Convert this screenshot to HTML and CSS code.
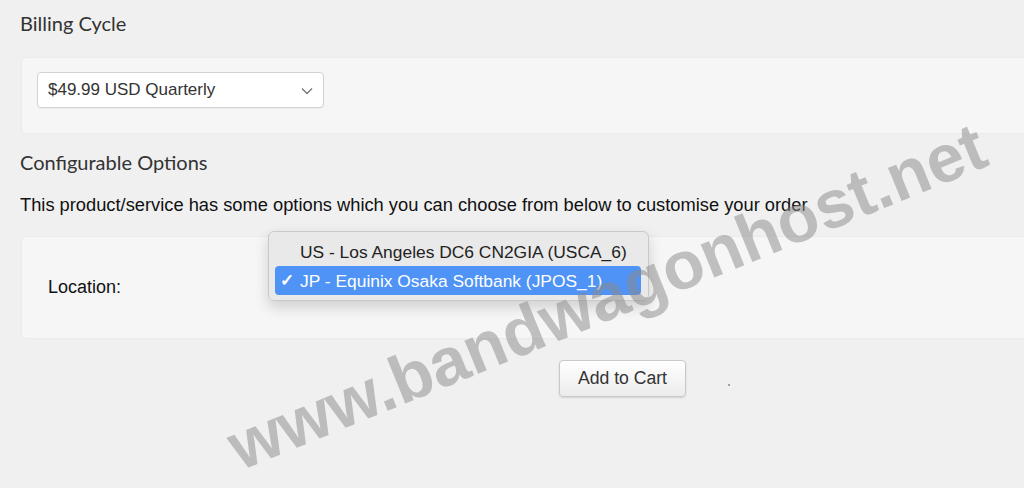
FILE: index.html
```html
<!DOCTYPE html>
<html lang="en">
<head>
    <meta charset="UTF-8">
    <title>Configure Product</title>
    <link rel="stylesheet" href="styles.css">
</head>
<body>
    <div class="page">
        <h2 class="section-title">Billing Cycle</h2>
        <div class="panel panel-cycle">
            <div class="select">
                <span>$49.99 USD Quarterly</span>
                <svg class="chevron" width="12" height="8" viewBox="0 0 12 8"><path d="M1 1.5 L6 6.5 L11 1.5" fill="none" stroke="#777" stroke-width="1.4"/></svg>
            </div>
        </div>

        <h2 class="section-title options-title">Configurable Options</h2>
        <p class="intro">This product/service has some options which you can choose from below to customise your order</p>

        <div class="panel panel-options">
            <label class="field-label">Location:</label>
        </div>

        <div class="actions">
            <button class="btn-cart">Add to Cart</button>
            <span class="dot"></span>
        </div>

        <!-- open native select menu -->
        <div class="menu">
            <div class="menu-item">US - Los Angeles DC6 CN2GIA (USCA_6)</div>
            <div class="menu-item selected"><span class="check">✓</span>JP - Equinix Osaka Softbank (JPOS_1)</div>
        </div>
    </div>

    <div class="watermark">www.bandwagonhost.net</div>
</body>
</html>
```

FILE: styles.css
```css
body {
    margin: 0;
    background: #f0f0f0;
    font-family: "Liberation Sans", Arial, sans-serif;
    color: #111;
    overflow: hidden;
    height: 488px;
}
.page {
    position: relative;
    padding: 0 0 0 20px;
}
.section-title {
    margin: 0;
    padding-top: 9px;
    font-family: Lato, "Open Sans", sans-serif;
    font-weight: 400;
    font-size: 20px;
    line-height: 28px;
    color: #333;
}
.panel {
    margin-left: 2px;
    margin-right: -20px;
    background: #f6f6f6;
    border-radius: 4px;
    box-shadow: 0 0 2px rgba(0, 0, 0, 0.08);
    box-sizing: border-box;
}
.panel-cycle {
    margin-top: 21px;
    height: 75px;
    padding: 14px 15px;
}
.select {
    width: 287px;
    height: 36px;
    box-sizing: border-box;
    background: #fff;
    border: 1px solid #d2d2d2;
    border-radius: 4px;
    display: flex;
    align-items: center;
    justify-content: space-between;
    padding: 0 10px 0 10px;
    font-size: 17px;
    color: #333;
    box-shadow: 0 1px 1px rgba(0, 0, 0, 0.04);
}
.chevron {
    margin-top: 1px;
}
.options-title {
    padding-top: 15px;
}
.intro {
    margin: 18px 0 0;
    font-size: 18.3px;
    line-height: 22px;
    color: #111;
}
.panel-options {
    margin-top: 21px;
    height: 101px;
    display: flex;
    align-items: center;
    padding: 0 26px;
}
.field-label {
    font-size: 18px;
    color: #111;
    margin-top: 0;
}
.actions {
    display: flex;
    align-items: center;
    margin-top: 22px;
    padding-left: 539px;
}
.btn-cart {
    width: 127px;
    height: 37px;
    background: linear-gradient(#ffffff, #ececec);
    border: 1px solid #c8c8c8;
    border-radius: 4px;
    font-family: "Liberation Sans", Arial, sans-serif;
    font-size: 17.6px;
    color: #333;
    box-shadow: 0 1px 2px rgba(0, 0, 0, 0.12);
    padding: 0;
}
.dot {
    width: 2px;
    height: 2px;
    background: #888;
    border-radius: 1px;
    margin: 13px 0 0 42px;
}
.menu {
    position: absolute;
    left: 268px;
    top: 231px;
    width: 381px;
    box-sizing: border-box;
    padding: 5px 7px 5px 6px;
    background: rgba(232, 232, 232, 0.97);
    border: 1px solid #c9c9c9;
    border-radius: 6px;
    box-shadow: 0 6px 14px rgba(0, 0, 0, 0.16);
}
.menu-item {
    height: 29px;
    line-height: 30px;
    padding-left: 25px;
    font-size: 17.4px;
    color: #222;
    border-radius: 4px;
    position: relative;
}
.menu-item.selected {
    background: #4e93f5;
    color: #fff;
}
.check {
    position: absolute;
    left: 5px;
    font-size: 17px;
    font-weight: 700;
}
.watermark {
    position: absolute;
    left: 240px;
    top: 414px;
    font-family: "Liberation Sans", Arial, sans-serif;
    font-weight: 700;
    font-size: 67.5px;
    line-height: 1;
    white-space: nowrap;
    color: rgba(140, 140, 140, 0.52);
    transform-origin: 0 57px;
    transform: rotate(-22.2deg);
    pointer-events: none;
}
```
